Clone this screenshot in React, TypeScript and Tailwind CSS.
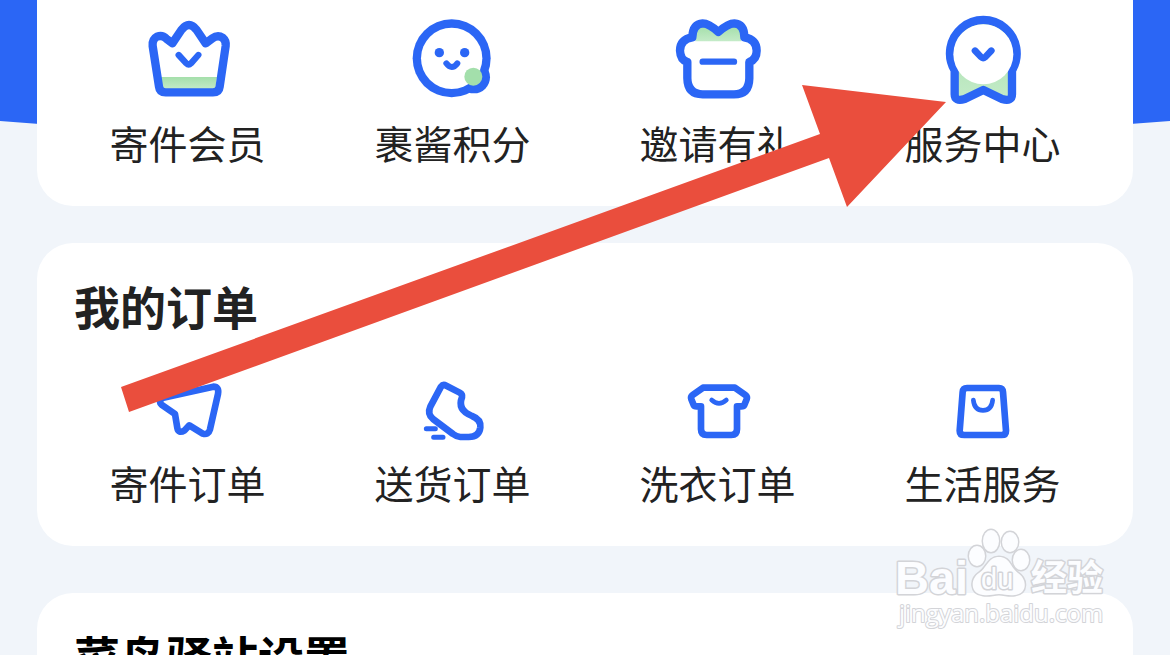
import type { ReactNode } from 'react';

type Entry = {
  label: string;
  viewBox: string;
  drawing: ReactNode;
};

const services: Entry[] = [
  {
    label: '寄件会员',
    viewBox: '-7 0 360 330',
    drawing: (
      <>
        <path fill="url(#mint)" stroke="none" d="M92 231H260L255 268H97Z" />
        <path d="M126 130L153 90Q176 60 199 90L226 130L246 115Q262 103 277 113Q288 122 286 138L268 260Q266 277 248 277H106Q88 277 86 260L67 138Q65 118 80 110Q96 104 108 116Z" />
        <path strokeWidth="19" d="M145 165L168 190Q175 197 182 190L204 165" />
      </>
    ),
  },
  {
    label: '裹酱积分',
    viewBox: '7 0 360 330',
    drawing: (
      <>
        <g stroke="none">
          <circle cx="183" cy="175" r="117" fill="#2b66f5" />
          <circle cx="250" cy="232" r="48" fill="#2b66f5" />
          <circle cx="183" cy="175" r="92" fill="#fff" />
          <circle cx="248" cy="230" r="27" fill="#a3dfab" />
          <circle cx="146" cy="158" r="14" fill="#2b66f5" />
          <circle cx="222" cy="158" r="14" fill="#2b66f5" />
        </g>
        <path strokeWidth="18" d="M167 190Q183 212 200 190" />
      </>
    ),
  },
  {
    label: '邀请有礼',
    viewBox: '-7 0 360 330',
    drawing: (
      <>
        <path
          fill="url(#mint)"
          stroke="none"
          d="M105 124Q103 80 128 80Q148 82 174 107Q200 82 221 80Q245 80 243 124Z"
        />
        <path d="M96 112Q59 118 59 152Q60 180 81 186V235Q82 283 127 283H221Q266 283 267 235V186Q289 178 289 152Q289 118 252 112Q252 72 222 70Q203 70 174 96Q146 70 127 70Q97 72 96 112Z" />
        <path strokeWidth="19" d="M127 185H221" />
      </>
    ),
  },
  {
    label: '服务中心',
    viewBox: '-7 0 360 330',
    drawing: (
      <>
        <path
          fill="url(#mint)"
          d="M88 211V283Q88 306 118 297L174 270L230 297Q260 306 260 283V211A100 100 0 1 0 88 211Z"
        />
        <circle cx="174" cy="163" r="90" fill="#fff" stroke="none" />
        <path strokeWidth="20" d="M149 152L167 171Q173 177 180 171L198 152" />
      </>
    ),
  },
];

const orders: Entry[] = [
  {
    label: '寄件订单',
    viewBox: '97 30 270 240',
    drawing: (
      <path d="M308 80Q326 80 322 102L298 208Q293 226 276 221L236 196L222 211Q203 222 200 204L193 162L155 136Q140 124 158 113Z" />
    ),
  },
  {
    label: '送货订单',
    viewBox: '-7 0 270 240',
    drawing: (
      <>
        <path d="M92 50Q98 42 108 47L148 68Q157 73 155 82Q140 120 185 138Q212 148 210 172Q207 200 175 201H150Q138 200 128 192L68 147Q50 132 60 110Z" />
        <path strokeWidth="15" d="M48 176H75M70 202H98" />
      </>
    ),
  },
  {
    label: '洗衣订单',
    viewBox: '7 0 270 240',
    drawing: (
      <>
        <path d="M97 53L66 75Q59 80 62 88L69 105Q71 109 78 109H91V178Q91 195 108 195H182Q199 195 199 178V109H212Q219 109 221 105L228 88Q231 80 224 75L193 53Z" />
        <path strokeWidth="14" d="M123 90Q145 110 167 90" />
      </>
    ),
  },
  {
    label: '生活服务',
    viewBox: '-7 0 270 240',
    drawing: (
      <>
        <path d="M80 54H176Q187 54 188 66L197 182Q197 195 184 195H72Q58 195 58 182L67 66Q68 54 80 54Z" />
        <path strokeWidth="14" d="M99 90Q102 121 128 121Q154 121 157 90" />
      </>
    ),
  },
];

const EntryGrid = ({
  entries,
  iconClass,
  strokeWidth,
}: {
  entries: Entry[];
  iconClass: string;
  strokeWidth: number;
}) => (
  <div className="grid grid-cols-4">
    {entries.map((entry) => (
      <button
        key={entry.label}
        type="button"
        className="flex flex-col items-center gap-2 cursor-pointer"
      >
        <svg
          className={iconClass}
          viewBox={entry.viewBox}
          fill="none"
          stroke="#2b66f5"
          strokeWidth={strokeWidth}
          strokeLinecap="round"
          strokeLinejoin="round"
          aria-hidden="true"
        >
          {entry.drawing}
        </svg>
        <span className="text-[39px] leading-[48px] whitespace-nowrap">
          {entry.label}
        </span>
      </button>
    ))}
  </div>
);

const Watermark = () => (
  <svg
    className="absolute top-[520px] right-[40px] w-[250px] h-[135px] pointer-events-none"
    viewBox="0 0 250 135"
    fill="#fcfdff"
    stroke="#d3d4d8"
    strokeWidth="3"
    strokeLinejoin="round"
    paintOrder="stroke"
  >
    <text x="15" y="74" fontSize="47" className="font-['Liberation_Sans'] font-bold">
      Bai
    </text>
    <ellipse cx="111" cy="21" rx="8" ry="11" />
    <ellipse cx="130" cy="22" rx="8" ry="10" />
    <ellipse cx="97" cy="36" rx="8" ry="10" />
    <ellipse cx="141" cy="40" rx="8" ry="10" />
    <path d="M119 37C108 37 107 48 99 53C90 59 90 74 103 75C110 76 113 74 119 74C125 74 128 76 135 75C148 73 147 59 138 53C130 47 130 37 119 37Z" />
    <text x="101" y="69" fontSize="29" className="font-['Liberation_Sans']">
      du
    </text>
    <text x="151" y="71" fontSize="36" className="font-bold">
      经验
    </text>
    <text
      x="19"
      y="102"
      fontSize="24"
      strokeWidth="2"
      className="font-['Open_Sans']"
    >
      jingyan.baidu.com
    </text>
  </svg>
);

const App = () => {
  return (
    <div className="relative h-screen overflow-hidden bg-[#f1f5fa] text-[#222] font-['Noto_Sans_CJK_SC',sans-serif]">
      <svg
        className="absolute top-0 left-0 w-full h-[160px]"
        viewBox="0 0 1170 160"
        preserveAspectRatio="none"
        aria-hidden="true"
      >
        <path fill="#2b66f5" d="M0 0H1170V121Q585 168 0 121Z" />
      </svg>
      <svg className="absolute w-0 h-0" aria-hidden="true">
        <linearGradient id="mint" x1="0" y1="0" x2="0" y2="1">
          <stop offset="0" stopColor="#a5dfab" />
          <stop offset="1" stopColor="#c4ebc8" />
        </linearGradient>
      </svg>

      <main className="relative flex flex-col px-[37px]">
        <section className="rounded-b-[36px] bg-white px-[18px] pb-10">
          <EntryGrid
            entries={services}
            iconClass="w-[120px] h-[110px]"
            strokeWidth={25}
          />
        </section>

        <section className="mt-[37px] rounded-[36px] bg-white px-[18px] pt-[34px] pb-10">
          <h2 className="px-[19px] text-[46px] leading-[56px] font-bold">
            我的订单
          </h2>
          <div className="pt-[37px]">
            <EntryGrid
              entries={orders}
              iconClass="w-[90px] h-[80px]"
              strokeWidth={20}
            />
          </div>
        </section>

        <section className="mt-[47px] rounded-t-[36px] bg-white px-[18px] pt-[34px] pb-10">
          <h2 className="px-[19px] text-[46px] leading-[56px] font-bold text-black">
            菜鸟驿站设置
          </h2>
        </section>
      </main>

      <Watermark />

      {/* pointer to the service centre */}
      <svg
        className="absolute top-0 left-0 w-full pointer-events-none"
        viewBox="0 0 1170 655"
        aria-hidden="true"
      >
        <path
          fill="#ea4e3d"
          d="M121 387L820 134L802 85L946 102L847 207L829 158L129 412Z"
        />
      </svg>
    </div>
  );
};

export default App;
